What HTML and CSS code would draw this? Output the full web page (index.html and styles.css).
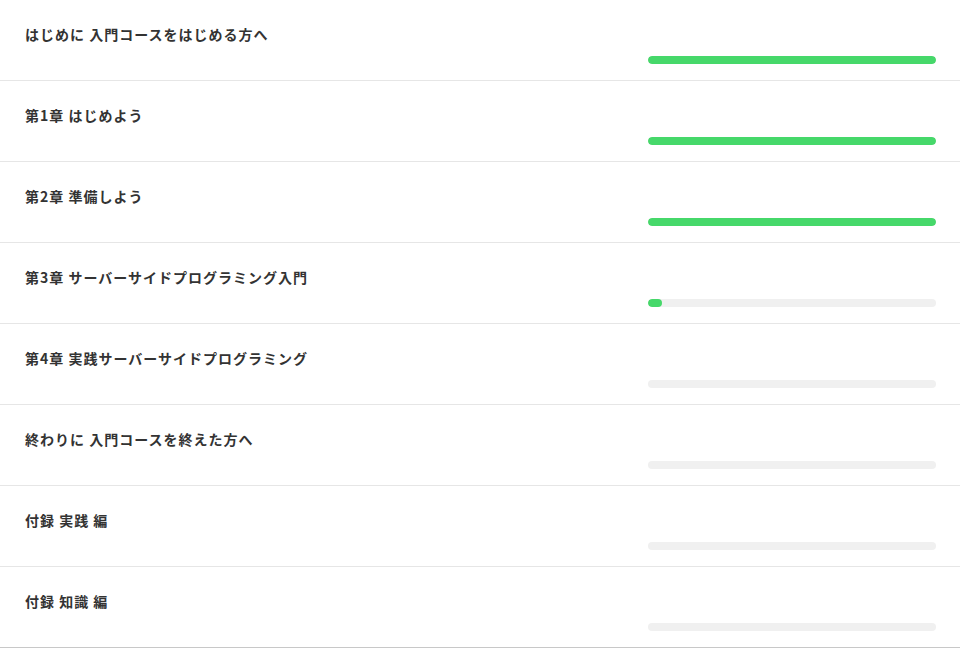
FILE: index.html
```html
<!DOCTYPE html>
<html lang="ja">

<head>
    <meta charset="UTF-8">
    <meta name="viewport" content="width=device-width, initial-scale=1.0">
    <title>コース進捗</title>
    <link rel="stylesheet" href="styles.css">
</head>

<body>
    <!-- Chapter list -->
    <ul class="chapters">
        <li class="chapter">
            <h2 class="chapter-title">はじめに 入門コースをはじめる方へ</h2>
            <div class="progress"><div class="progress-bar" style="width: 100%"></div></div>
        </li>
        <li class="chapter">
            <h2 class="chapter-title">第1章 はじめよう</h2>
            <div class="progress"><div class="progress-bar" style="width: 100%"></div></div>
        </li>
        <li class="chapter">
            <h2 class="chapter-title">第2章 準備しよう</h2>
            <div class="progress"><div class="progress-bar" style="width: 100%"></div></div>
        </li>
        <li class="chapter">
            <h2 class="chapter-title">第3章 サーバーサイドプログラミング入門</h2>
            <div class="progress"><div class="progress-bar" style="width: 5%"></div></div>
        </li>
        <li class="chapter">
            <h2 class="chapter-title">第4章 実践サーバーサイドプログラミング</h2>
            <div class="progress"><div class="progress-bar" style="width: 0%"></div></div>
        </li>
        <li class="chapter">
            <h2 class="chapter-title">終わりに 入門コースを終えた方へ</h2>
            <div class="progress"><div class="progress-bar" style="width: 0%"></div></div>
        </li>
        <li class="chapter">
            <h2 class="chapter-title">付録 実践 編</h2>
            <div class="progress"><div class="progress-bar" style="width: 0%"></div></div>
        </li>
        <li class="chapter last">
            <h2 class="chapter-title">付録 知識 編</h2>
            <div class="progress"><div class="progress-bar" style="width: 0%"></div></div>
        </li>
    </ul>
</body>

</html>
```

FILE: styles.css
```css
body {
    margin: 0;
    background-color: #fff;
    font-family: "Noto Sans CJK JP", "Noto Sans", sans-serif;
    color: #333;
}

.chapters {
    list-style: none;
    margin: 0;
    padding: 0;
}

.chapter {
    display: flex;
    flex-direction: column;
    height: 81px;
    padding: 23px 24px 0 25px;
    box-sizing: border-box;
    border-bottom: 1px solid #e6e6e6;
}

.chapter.last {
    border-bottom-color: #c8c8c8;
}

.chapter-title {
    margin: 0;
    font-size: 14px;
    font-weight: bold;
    line-height: 22px;
    letter-spacing: 1px;
}

.progress {
    align-self: flex-end;
    width: 288px;
    height: 8px;
    margin-top: 11px;
    border-radius: 4px;
    background-color: #f0f0f0;
    overflow: hidden;
}

.progress-bar {
    height: 100%;
    border-radius: 4px;
    background-color: #46d86a;
}
```
